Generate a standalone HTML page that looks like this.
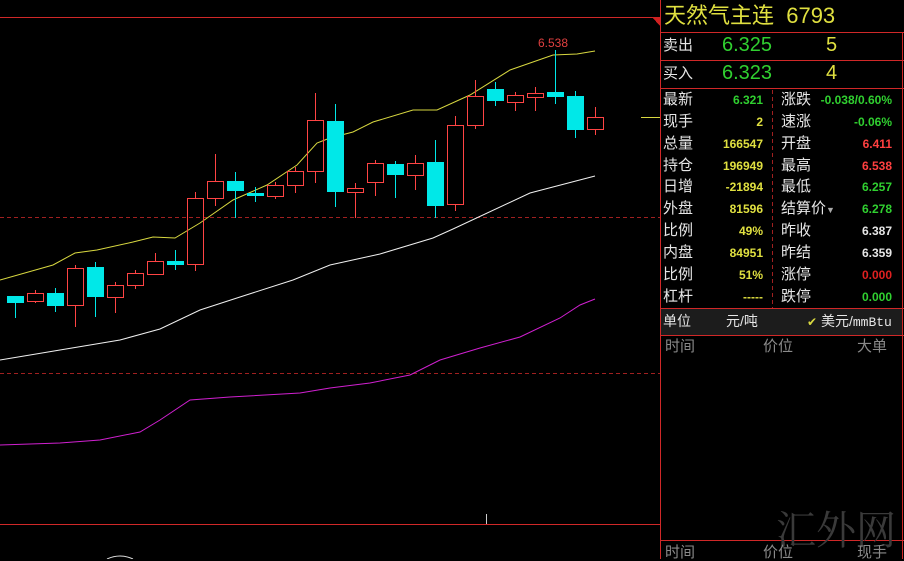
<!DOCTYPE html>
<html><head><meta charset="utf-8"><style>
body{margin:0;background:#000;width:904px;height:559px;overflow:hidden;position:relative;font-family:"Liberation Sans","Noto Sans CJK SC",sans-serif}
.t{position:absolute;white-space:nowrap;line-height:1}
.w{color:#e6e6e6;font-size:15px}
.v{font-size:12px;font-weight:bold}
.y{color:#e0e040}.g{color:#30d030}.r{color:#ff4040}.wh{color:#e6e6e6}
.gr{color:#8a8a8a;font-size:15px}
</style></head><body>
<svg width="904" height="559" style="position:absolute;left:0;top:0" shape-rendering="crispEdges">
<g stroke="#d02828" stroke-width="1">
<line x1="0" y1="17.5" x2="660" y2="17.5"/>
<line x1="0" y1="524.5" x2="660" y2="524.5"/>
<line x1="660.5" y1="0" x2="660.5" y2="559"/>
<line x1="902.5" y1="32" x2="902.5" y2="559"/>
<line x1="660" y1="32.5" x2="904" y2="32.5"/>
<line x1="660" y1="60.5" x2="904" y2="60.5"/>
<line x1="660" y1="88.5" x2="904" y2="88.5"/>
<line x1="660" y1="308.5" x2="904" y2="308.5"/>
<line x1="660" y1="335.5" x2="904" y2="335.5"/>
<line x1="660" y1="540.5" x2="904" y2="540.5"/>
<line x1="0" y1="217.5" x2="660" y2="217.5" stroke-dasharray="4,3" stroke="#a02020"/>
<line x1="0" y1="373.5" x2="660" y2="373.5" stroke-dasharray="4,3" stroke="#a02020"/>
<line x1="772.5" y1="90" x2="772.5" y2="308" stroke-dasharray="4,3" stroke="#a02020"/>
</g>
<polygon points="652,17 660,17 660,26" fill="#d02020"/>
<rect x="661" y="309" width="241" height="26" fill="#1c1c1c"/>
<line x1="486.5" y1="514" x2="486.5" y2="524" stroke="#ccc"/>
<path d="M107,559 Q120,553 133,559" stroke="#ddd" fill="none" shape-rendering="auto"/>
<line x1="641" y1="117.5" x2="660" y2="117.5" stroke="#d8d840"/>
<g shape-rendering="auto">
<polyline fill="none" stroke="#d8d840" stroke-width="1" points="0,280 53,265 75,253 97,250 133,242 153,237 175,238 200,223 233,200 267,185 297,165 317,143 330,138 353,132 373,122 413,110 437,110 470,95 510,70 553,55 577,54 595,51"/>
<polyline fill="none" stroke="#f0f0f0" stroke-width="1" points="0,360 60,350 120,340 160,329 200,310 240,297 293,280 330,265 380,254 433,238 453,229 530,193 595,176"/>
<polyline fill="none" stroke="#d020d0" stroke-width="1" points="0,445 60,443 100,440 140,432 160,420 190,400 230,397 300,393 330,388 370,383 410,375 440,360 480,348 520,337 560,318 580,305 595,299"/>
</g>
<g id="c"></g>
<text x="538" y="47" fill="#e04040" font-size="12" font-family="Liberation Sans">6.538</text>
</svg>
<script>
var d=[
[7,296,303,296,318,0],[27,293,301,290,303,1],[47,293,306,288,312,0],[67,268,305,265,327,1],[87,267,297,262,317,0],[107,285,297,282,313,1],[127,273,285,270,289,1],[147,261,274,253,274,1],[167,261,265,250,270,0],[187,198,264,192,271,1],[207,181,198,154,206,1],[227,181,191,172,218,0],[247,193,196,187,202,0],[267,185,196,182,199,1],[287,171,185,167,193,1],[307,120,171,93,183,1],[327,121,192,104,207,0],[347,188,192,183,218,1],[367,163,182,160,196,1],[387,164,175,161,198,0],[407,163,175,155,190,1],[427,162,206,140,218,0],[447,125,204,116,211,1],[467,96,125,80,129,1],[487,89,101,82,106,0],[507,95,102,92,111,1],[527,93,97,87,111,1],[547,92,97,50,104,0],[567,96,130,91,138,0],[587,117,129,107,135,1]];
var s='';d.forEach(function(c){var x=c[0],cx=x+8.5;if(c[5]){s+='<line x1="'+cx+'" y1="'+c[3]+'" x2="'+cx+'" y2="'+c[1]+'" stroke="#ff4444"/><line x1="'+cx+'" y1="'+c[2]+'" x2="'+cx+'" y2="'+c[4]+'" stroke="#ff4444"/><rect x="'+(x+.5)+'" y="'+(c[1]+.5)+'" width="16" height="'+(c[2]-c[1])+'" fill="none" stroke="#ff4444"/>';}else{s+='<line x1="'+cx+'" y1="'+c[3]+'" x2="'+cx+'" y2="'+c[4]+'" stroke="#00e8e8"/><rect x="'+x+'" y="'+c[1]+'" width="17" height="'+Math.max(3,c[2]-c[1])+'" fill="#00e8e8"/>';}});
document.getElementById('c').innerHTML=s;
</script>
<div class="t y" style="left:664px;top:5px;font-size:22px">天然气主连&nbsp;&nbsp;6793</div>
<div class="t w" style="left:663px;top:38px">卖出</div>
<div class="t g" style="left:722px;top:35px;font-size:20px">6.325</div>
<div class="t y" style="left:826px;top:35px;font-size:20px">5</div>
<div class="t w" style="left:663px;top:66px">买入</div>
<div class="t g" style="left:722px;top:63px;font-size:20px">6.323</div>
<div class="t y" style="left:826px;top:63px;font-size:20px">4</div>
<div style="position:absolute;left:663px;top:92px;width:100px">
<div class="t w" style="top:0">最新</div><div class="t v g" style="right:0;top:2px">6.321</div>
<div class="t w" style="top:22px">现手</div><div class="t v y" style="right:0;top:24px">2</div>
<div class="t w" style="top:44px">总量</div><div class="t v y" style="right:0;top:46px">166547</div>
<div class="t w" style="top:66px">持仓</div><div class="t v y" style="right:0;top:68px">196949</div>
<div class="t w" style="top:87px">日增</div><div class="t v y" style="right:0;top:89px">-21894</div>
<div class="t w" style="top:109px">外盘</div><div class="t v y" style="right:0;top:111px">81596</div>
<div class="t w" style="top:131px">比例</div><div class="t v y" style="right:0;top:133px">49%</div>
<div class="t w" style="top:153px">内盘</div><div class="t v y" style="right:0;top:155px">84951</div>
<div class="t w" style="top:175px">比例</div><div class="t v y" style="right:0;top:177px">51%</div>
<div class="t w" style="top:197px">杠杆</div><div class="t v y" style="right:0;top:199px">-----</div>
</div>
<div style="position:absolute;left:781px;top:92px;width:111px">
<div class="t w" style="top:0">涨跌</div><div class="t v g" style="right:0;top:2px">-0.038/0.60%</div>
<div class="t w" style="top:22px">速涨</div><div class="t v g" style="right:0;top:24px">-0.06%</div>
<div class="t w" style="top:44px">开盘</div><div class="t v r" style="right:0;top:46px">6.411</div>
<div class="t w" style="top:66px">最高</div><div class="t v r" style="right:0;top:68px">6.538</div>
<div class="t w" style="top:87px">最低</div><div class="t v g" style="right:0;top:89px">6.257</div>
<div class="t w" style="top:109px">结算价<span style="font-size:9px;color:#aaa">▼</span></div><div class="t v g" style="right:0;top:111px">6.278</div>
<div class="t w" style="top:131px">昨收</div><div class="t v wh" style="right:0;top:133px">6.387</div>
<div class="t w" style="top:153px">昨结</div><div class="t v wh" style="right:0;top:155px">6.359</div>
<div class="t w" style="top:175px">涨停</div><div class="t v r" style="right:0;top:177px;color:#e02020">0.000</div>
<div class="t w" style="top:197px">跌停</div><div class="t v g" style="right:0;top:199px">0.000</div>
</div>
<div class="t w" style="left:663px;top:314px;font-size:14px">单位</div>
<div class="t w" style="left:726px;top:314px;font-size:14px">元/吨</div>
<div class="t w" style="left:807px;top:314px;font-size:14px"><span style="color:#d8d840;font-size:12px">✔</span> 美元/<span style="font-family:'Liberation Mono',monospace;font-size:13px">mmBtu</span></div>
<div class="t gr" style="left:665px;top:339px">时间</div>
<div class="t gr" style="left:763px;top:339px">价位</div>
<div class="t gr" style="left:857px;top:339px">大单</div>
<div class="t" style="left:776px;top:508px;font-size:40px;color:#3a3a3a;font-family:'Noto Serif CJK SC',serif">汇外网</div>
<div class="t gr" style="left:665px;top:545px">时间</div>
<div class="t gr" style="left:763px;top:545px">价位</div>
<div class="t gr" style="left:857px;top:545px">现手</div>
</body></html>
